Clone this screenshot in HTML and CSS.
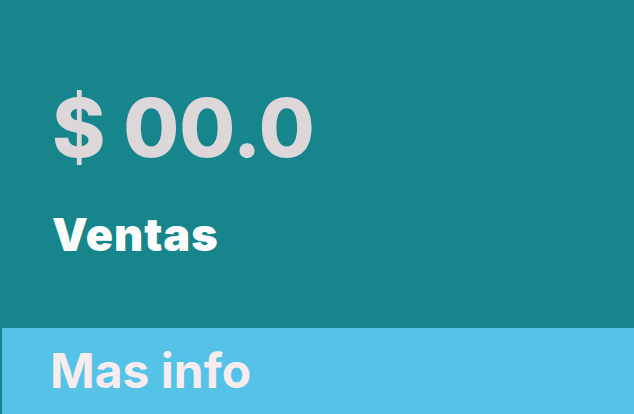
FILE: index.html
```html
<!DOCTYPE html>
<html lang="es">
<head>
<meta charset="utf-8">
<link rel="stylesheet" href="styles.css">
</head>
<body>
<div class="small-box">
  <div class="inner">
    <h3 class="amount">$ 00.0</h3>
    <p class="label">Ventas</p>
  </div>
  <a class="footer" href="#">Mas info</a>
</div>
</body>
</html>
```
FILE: styles.css
```css
html, body {
  margin: 0;
  padding: 0;
  height: 100%;
}
body {
  background: #17868c;
  font-family: Inter, "Noto Sans", sans-serif;
  overflow: hidden;
}
.small-box {
  display: flex;
  flex-direction: column;
  height: 414px;
  background: #17868c;
}
.inner {
  display: flex;
  flex-direction: column;
  padding: 88px 0 0 52px;
  height: 328px;
  box-sizing: border-box;
}
.amount {
  margin: 0;
  font-size: 81px;
  line-height: 1;
  font-weight: 800;
  color: #ddd7d9;
}
.label {
  margin: 43px 0 0 0;
  font-size: 45px;
  line-height: 1;
  font-weight: 900;
  letter-spacing: 1px;
  color: #ffffff;
}
.footer {
  display: block;
  flex: 1;
  margin-left: 2px;
  padding: 19px 0 0 48px;
  background: #55c3e8;
  color: #f9ecee;
  font-size: 48px;
  line-height: 1;
  font-weight: 700;
  text-decoration: none;
}
```
